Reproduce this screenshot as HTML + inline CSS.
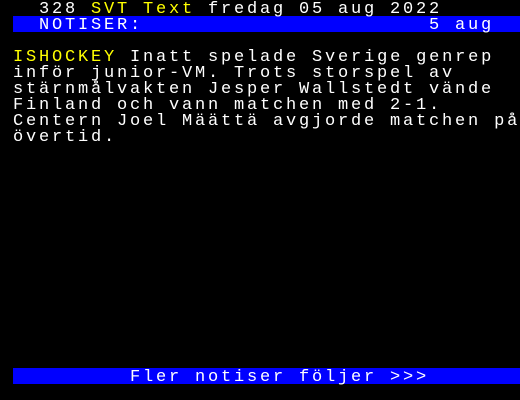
<!DOCTYPE html>
<html><head><meta charset="utf-8"><style>
html,body{margin:0;padding:0;background:#000;}
body{width:520px;height:400px;position:relative;overflow:hidden;}
.r{position:absolute;left:0;height:16px;line-height:16px;margin-top:2px;font-family:"Liberation Mono",monospace;font-size:17px;letter-spacing:2.8px;color:#fff;white-space:pre;}
.y{color:#ff0;}
.b{position:absolute;left:13px;width:507px;height:16px;background:#0000ff;}
</style></head><body>
<div class="b" style="top:16px"></div>
<div class="b" style="top:368px"></div>
<div class="r" style="top:0">   328 <span class="y">SVT Text</span> fredag 05 aug 2022</div>
<div class="r" style="top:16px">   NOTISER:                      5 aug</div>
<div class="r" style="top:48px"> <span class="y">ISHOCKEY</span> Inatt spelade Sverige genrep</div>
<div class="r" style="top:64px"> inför junior-VM. Trots storspel av</div>
<div class="r" style="top:80px"> stärnmålvakten Jesper Wallstedt vände</div>
<div class="r" style="top:96px"> Finland och vann matchen med 2-1.</div>
<div class="r" style="top:112px"> Centern Joel Määttä avgjorde matchen på</div>
<div class="r" style="top:128px"> övertid.</div>
<div class="r" style="top:368px">          Fler notiser följer &gt;&gt;&gt;</div>
</body></html>
